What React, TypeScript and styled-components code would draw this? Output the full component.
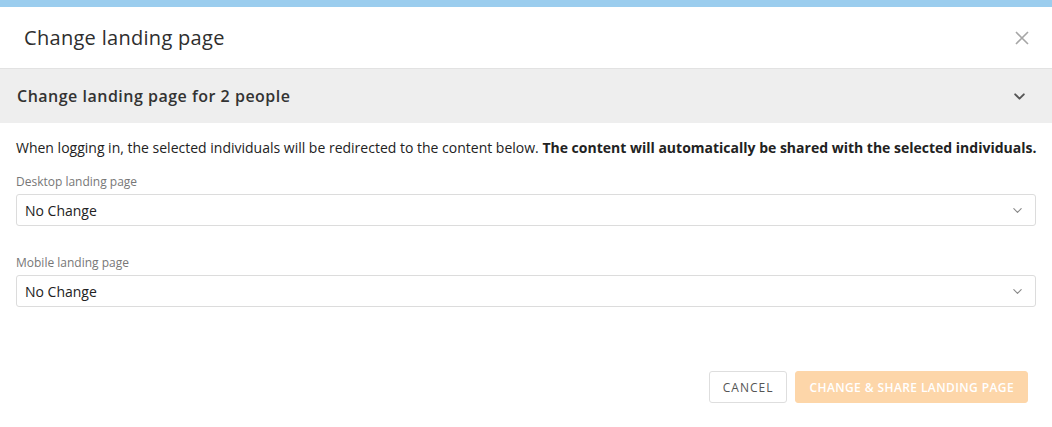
import React from "react";
import styled, { createGlobalStyle } from "styled-components";

const Global = createGlobalStyle`
  html, body { margin: 0; padding: 0; background: #fff; }
  body { font-family: "Open Sans", "Noto Sans", sans-serif; color: #222; }
  * { box-sizing: border-box; }
`;

const Page = styled.div`
  width: 1052px;
  height: 427px;
  display: flex;
  flex-direction: column;
  background: #fff;
  overflow: hidden;
`;

const TopBar = styled.div`
  height: 7px;
  background: #9bcdee;
  flex: none;
`;

const Header = styled.div`
  height: 62px;
  display: flex;
  align-items: center;
  justify-content: space-between;
  padding: 0 22px 0 24px;
  border-bottom: 1px solid #e2e2e2;
  flex: none;
`;

const Title = styled.h1`
  margin: 0;
  font-size: 20px;
  font-weight: 400;
  color: #2e2e2e;
  letter-spacing: 0.3px;
`;

const CloseButton = styled.button`
  border: none;
  background: none;
  padding: 0;
  width: 16px;
  height: 16px;
  display: flex;
  align-items: center;
  justify-content: center;
  cursor: pointer;
`;

const Section = styled.div`
  height: 54px;
  background: #eeeeee;
  display: flex;
  align-items: center;
  justify-content: space-between;
  padding: 0 26px 0 17px;
  flex: none;
`;

const SectionTitle = styled.div`
  font-size: 16px;
  font-weight: 600;
  color: #333;
  letter-spacing: 0.5px;
`;

const Body = styled.div`
  padding: 15px 16px 0 16px;
  display: flex;
  flex-direction: column;
  flex: 1;
`;

const Intro = styled.p`
  margin: 0 0 16px 0;
  font-size: 14px;
  line-height: 20px;
  color: #222;
  white-space: nowrap;
  b { font-weight: 700; }
`;

const Field = styled.div<{ $gap: number }>`
  display: flex;
  flex-direction: column;
  margin-bottom: ${(p) => p.$gap}px;
`;

const Label = styled.label`
  font-size: 12px;
  line-height: 16px;
  color: #777;
  margin-bottom: 4px;
`;

const Select = styled.div`
  height: 32px;
  border: 1px solid #dcdcdc;
  border-radius: 3px;
  display: flex;
  align-items: center;
  justify-content: space-between;
  padding: 0 12px 0 8px;
  font-size: 14px;
  color: #222;
`;

const Footer = styled.div`
  display: flex;
  justify-content: flex-end;
  gap: 8px;
  padding: 0 8px 0 0;
  margin-top: 64px;
`;

const Button = styled.button<{ $primary?: boolean }>`
  height: 32px;
  border-radius: 3px;
  font-family: "Open Sans", "Noto Sans", sans-serif;
  font-size: 12px;
  letter-spacing: ${(p) => (p.$primary ? 0.4 : 1)}px;
  text-transform: uppercase;
  padding: 0 13px;
  border: 1px solid ${(p) => (p.$primary ? "#fdd6a9" : "#dedede")};
  background: ${(p) => (p.$primary ? "#fdd6a9" : "#fff")};
  color: ${(p) => (p.$primary ? "#fff" : "#555")};
  font-weight: ${(p) => (p.$primary ? 600 : 400)};
  cursor: pointer;
`;

const Chevron = ({ color, size, stroke }: { color: string; size: number; stroke: number }) => (
  <svg width={size} height={size} viewBox="0 0 12 12" fill="none">
    <path d="M2 4 L6 8 L10 4" stroke={color} strokeWidth={stroke} strokeLinecap="round" strokeLinejoin="round" />
  </svg>
);

export default function App() {
  return (
    <Page>
      <Global />
      <TopBar />
      <Header>
        <Title>Change landing page</Title>
        <CloseButton aria-label="Close">
          <svg width="14" height="14" viewBox="0 0 14 14">
            <path d="M1 1 L13 13 M13 1 L1 13" stroke="#a6a6a6" strokeWidth="1.6" />
          </svg>
        </CloseButton>
      </Header>
      <Section>
        <SectionTitle>Change landing page for 2 people</SectionTitle>
        <Chevron color="#555" size={13} stroke={1.8} />
      </Section>
      <Body>
        <Intro>
          When logging in, the selected individuals will be redirected to the content below.{" "}
          <b>The content will automatically be shared with the selected individuals.</b>
        </Intro>
        <Field $gap={29}>
          <Label>Desktop landing page</Label>
          <Select>
            No Change
            <Chevron color="#888" size={11} stroke={1.2} />
          </Select>
        </Field>
        <Field $gap={0}>
          <Label>Mobile landing page</Label>
          <Select>
            No Change
            <Chevron color="#888" size={11} stroke={1.2} />
          </Select>
        </Field>
        <Footer>
          <Button>Cancel</Button>
          <Button $primary>Change &amp; Share Landing Page</Button>
        </Footer>
      </Body>
    </Page>
  );
}
